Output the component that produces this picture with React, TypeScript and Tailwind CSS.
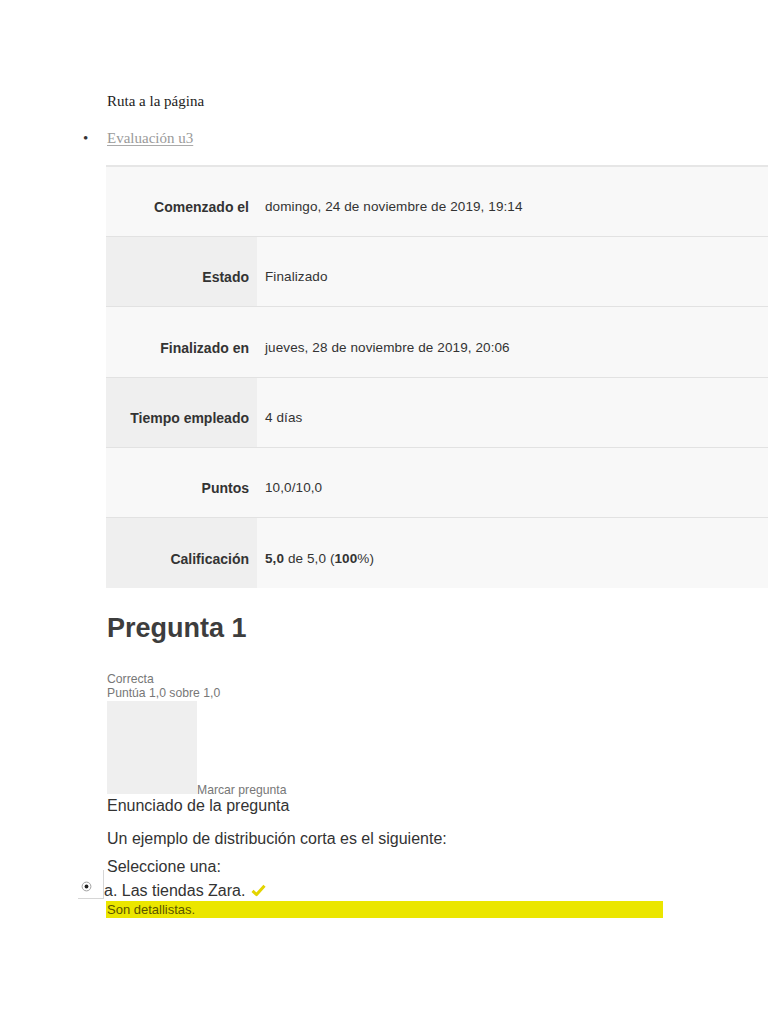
const ROWS: { label: string; value: React.ReactNode; h: string }[] = [
  { label: "Comenzado el", value: "domingo, 24 de noviembre de 2019, 19:14", h: "h-[70px]" },
  { label: "Estado", value: "Finalizado", h: "h-[70px]" },
  { label: "Finalizado en", value: "jueves, 28 de noviembre de 2019, 20:06", h: "h-[71px]" },
  { label: "Tiempo empleado", value: "4 días", h: "h-[70px]" },
  { label: "Puntos", value: "10,0/10,0", h: "h-[70px]" },
  {
    label: "Calificación",
    value: (
      <>
        <b>5,0</b> de 5,0 (<b>100</b>%)
      </>
    ),
    h: "h-[70px]",
  },
];

function SummaryTable() {
  return (
    <div className="w-[700px] border-t-2 border-[#e6e6e6]">
      {ROWS.map((r, i) => {
        const even = i % 2 === 1;
        const last = i === ROWS.length - 1;
        return (
          <div
            key={r.label}
            className={`flex ${r.h} ${last ? "" : "border-b border-[#e2e2e2]"} bg-[#f8f8f8]`}
          >
            <div
              className={`flex w-[151px] shrink-0 items-end justify-end pb-[20px] pr-2 text-[14px] font-bold leading-[18px] text-[#333] ${
                even ? "bg-[#efefef]" : ""
              }`}
            >
              {r.label}
            </div>
            <div className="flex flex-1 items-end pb-[20px] pl-2 text-[13.5px] leading-[18px] tracking-[0.1px] text-[#333]">
              <span>{r.value}</span>
            </div>
          </div>
        );
      })}
    </div>
  );
}

function RadioMark() {
  return (
    <div className="flex h-[29px] w-[26px] items-start border-b border-r border-[#d6d6d6] pl-[3px] pt-[11px]">
      <svg width="11" height="11" viewBox="0 0 11 11">
        <circle cx="5.5" cy="5.5" r="4.4" fill="#fff" stroke="#a0a0a0" strokeWidth="1" />
        <circle cx="5.5" cy="5.5" r="1.9" fill="#222" />
      </svg>
    </div>
  );
}

function Check() {
  return (
    <svg width="15" height="13" viewBox="0 0 15 13" className="ml-[6px] mt-[-1px]">
      <path d="M1.5 6.8 L5.6 10.6 L13.5 1.8" fill="none" stroke="#e3d400" strokeWidth="3" strokeLinejoin="round" />
    </svg>
  );
}

export default function App() {
  return (
    <div className="relative h-[1024px] w-[768px] overflow-hidden bg-white font-['Liberation_Sans',Arial,sans-serif]">
      <div className="pt-[92px]">
        <div className="pl-[107px] font-['Liberation_Serif',serif] text-[15px] leading-[18px] text-[#222]">
          Ruta a la página
        </div>
        <div className="mt-[19px] flex items-center font-['Liberation_Serif',serif] text-[15px] leading-[18px]">
          <span className="w-[107px] pl-[83px] text-[#333]">•</span>
          <span className="text-[#9a9a9a] underline decoration-[#aaa] underline-offset-2">Evaluación u3</span>
        </div>
      </div>

      <div className="mt-[18px] pl-[106px]">
        <SummaryTable />

        <h2 className="mt-[25px] pl-[1px] text-[27px] font-bold leading-[31px] text-[#3d3d3d]">Pregunta 1</h2>

        <div className="mt-[28px] pl-[1px] text-[12.2px] leading-[14px] text-[#777]">
          <div>Correcta</div>
          <div>Puntúa 1,0 sobre 1,0</div>
        </div>
        <div className="mt-[1px] flex items-baseline pl-[1px]">
          <div className="h-[93px] w-[90px] bg-[#efefef]" />
          <span className="text-[12.2px] leading-[14px] text-[#777]">Marcar pregunta</span>
        </div>

        <div className="pl-[1px] text-[16px] leading-[20px] text-[#333]">
          <div className="-mt-[1px]">Enunciado de la pregunta</div>
          <div className="mt-[13px]">Un ejemplo de distribución corta es el siguiente:</div>
          <div className="mt-[8px]">Seleccione una:</div>
        </div>
      </div>

      <div className="-mt-[7px] flex items-start pl-[78px]">
        <RadioMark />
        <div className="mt-[11px] flex items-center text-[16px] leading-[20px] text-[#333]">
          a. Las tiendas Zara.
          <Check />
        </div>
      </div>
      <div className="ml-[106px] w-[557px] bg-[#ebe600] pl-[1px] text-[13px] leading-[17px] text-[#5a5400]">
        Son detallistas.
      </div>
    </div>
  );
}
